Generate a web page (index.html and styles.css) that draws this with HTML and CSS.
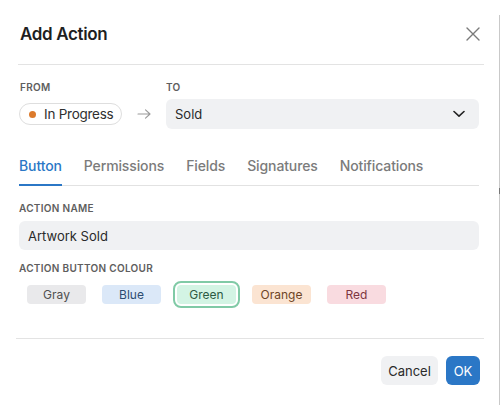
FILE: index.html
```html
<!DOCTYPE html>
<html>
<head>
<meta charset="utf-8">
<link rel="stylesheet" href="styles.css">
</head>
<body>
<div class="modal">
  <div class="header">
    <h1 class="title">Add Action</h1>
    <button class="close" aria-label="Close">
      <svg width="14" height="14" viewBox="0 0 14 14"><path d="M1 1L13 13M13 1L1 13" stroke="#7a7a7a" stroke-width="1.4" fill="none" stroke-linecap="round"/></svg>
    </button>
  </div>
  <div class="content">
    <div class="transition">
      <div class="from-col">
        <div class="label">FROM</div>
        <div class="pill-wrap">
          <span class="pill"><span class="dot"></span>In Progress</span>
        </div>
      </div>
      <div class="arrow-col">
        <svg width="14" height="10" viewBox="0 0 14 10"><path d="M1 5H13M8.5 0.8L13 5L8.5 9.2" stroke="#9a9a9a" stroke-width="1.1" fill="none" stroke-linecap="round" stroke-linejoin="round"/></svg>
      </div>
      <div class="to-col">
        <div class="label">TO</div>
        <div class="select">
          <span>Sold</span>
          <svg width="12" height="8" viewBox="0 0 12 8"><path d="M1 1.5L6 6.2L11 1.5" stroke="#222" stroke-width="1.6" fill="none" stroke-linecap="round" stroke-linejoin="round"/></svg>
        </div>
      </div>
    </div>
    <div class="tabs">
      <div class="tab active">Button</div>
      <div class="tab">Permissions</div>
      <div class="tab">Fields</div>
      <div class="tab">Signatures</div>
      <div class="tab">Notifications</div>
    </div>
    <div class="label label-name">ACTION NAME</div>
    <div class="input">Artwork Sold</div>
    <div class="label label-colour">ACTION BUTTON COLOUR</div>
    <div class="chips">
      <span class="chip gray">Gray</span>
      <span class="chip blue">Blue</span>
      <span class="chip green selected">Green</span>
      <span class="chip orange">Orange</span>
      <span class="chip red">Red</span>
    </div>
  </div>
  <div class="footer-divider"></div>
  <div class="footer">
    <button class="btn cancel">Cancel</button>
    <button class="btn ok">OK</button>
  </div>
</div>
<div class="edge"><span class="thumb"></span></div>
</body>
</html>
```
FILE: styles.css
```css
* { box-sizing: border-box; }
html, body { margin: 0; padding: 0; background: #fff; }
body {
  font-family: Inter, "Noto Sans", "Liberation Sans", sans-serif;
  color: #2a2a2a;
  width: 500px;
  height: 405px;
  overflow: hidden;
}
.modal { width: 499px; }
.header {
  height: 65px;
  margin: 0 15px 0 18px;
  padding: 3px 4px 0 2px;
  border-bottom: 1px solid #e3e3e3;
  display: flex;
  align-items: center;
  justify-content: space-between;
}
.title {
  margin: 0;
  font-size: 17px;
  font-weight: 600;
  color: #1f1f1f;
  letter-spacing: -0.35px;
}
.close {
  border: 0;
  background: none;
  padding: 0;
  width: 14px;
  height: 14px;
  display: flex;
  cursor: pointer;
}
.content { padding: 0 20px 0 19px; }
.label {
  font-size: 10px;
  font-weight: 600;
  color: #5e5e5e;
  letter-spacing: 0.3px;
  line-height: 14px;
}
.transition { display: flex; padding-top: 15px; }
.from-col { width: 104px; flex-shrink: 0; display: flex; flex-direction: column; }
.from-col .label { margin-left: 1px; }
.pill-wrap { height: 30px; margin-top: 5px; display: flex; align-items: center; }
.pill {
  display: inline-flex;
  align-items: center;
  white-space: nowrap;
  height: 22px;
  padding: 0 8px 0 9px;
  border: 1px solid #dedede;
  border-radius: 11px;
  font-size: 13.5px;
  letter-spacing: -0.25px;
  color: #2f2f2f;
}
.dot {
  width: 7px;
  height: 7px;
  border-radius: 50%;
  background: #dc7a2c;
  margin-right: 8px;
}
.arrow-col {
  width: 43px;
  flex-shrink: 0;
  height: 30px;
  margin-top: 19px;
  display: flex;
  align-items: center;
  padding-left: 14px;
}
.to-col { flex: 1; display: flex; flex-direction: column; }
.select {
  margin-top: 5px;
  height: 30px;
  background: #f0f1f3;
  border-radius: 6px;
  display: flex;
  align-items: center;
  justify-content: space-between;
  padding: 0 14px 0 9px;
  font-size: 13px;
  color: #2a2a2a;
}
.tabs {
  margin-top: 16px;
  display: flex;
  gap: 22px;
  border-bottom: 1px solid #e2e2e2;
}
.tab {
  padding: 11px 0 8px;
  line-height: 20px;
  font-size: 14px;
  font-weight: 500;
  letter-spacing: -0.12px;
  color: #7b7b7b;
  border-bottom: 2px solid transparent;
  margin-bottom: -1px;
}
.tab.active { color: #2b77c6; border-bottom-color: #2b77c6; }
.label-name { margin-top: 15px; }
.input {
  margin-top: 6px;
  height: 29px;
  background: #f0f1f3;
  border-radius: 6px;
  display: flex;
  align-items: center;
  padding-left: 9px;
  font-size: 13px;
  color: #2a2a2a;
}
.label-colour { margin-top: 11px; }
.chips {
  margin-top: 10px;
  padding-left: 8px;
  display: flex;
  gap: 16px;
}
.chip {
  width: 59px;
  height: 19px;
  border-radius: 4px;
  display: flex;
  align-items: center;
  justify-content: center;
  font-size: 12px;
}
.chip.gray { background: #e9e9eb; color: #505050; }
.chip.blue { background: #dbe8f8; color: #2d4b70; }
.chip.green { background: #d3f4e4; color: #2c5a43; }
.chip.orange { background: #fbe4d2; color: #6e4427; }
.chip.red { background: #f9dbe0; color: #7e3541; }
.chip.selected { outline: 2px solid #80caa6; outline-offset: 2px; border-radius: 4px; }
.footer-divider {
  margin: 34px 15px 0 16px;
  border-top: 1px solid #e3e3e3;
}
.footer {
  display: flex;
  justify-content: flex-end;
  gap: 8px;
  padding: 17px 19px 0 0;
}
.btn {
  height: 29px;
  border: 0;
  border-radius: 6px;
  font-family: inherit;
  font-size: 13px;
  padding: 0;
}
.btn.cancel { width: 57px; background: #f0f1f3; color: #2a2a2a; }
.btn.ok { width: 34px; background: #2b77c6; color: #fff; }
.edge {
  position: fixed;
  top: 15px;
  right: 0;
  bottom: 0;
  width: 1px;
  background: #c9c9c9;
}
.thumb {
  position: absolute;
  top: 173px;
  left: 0;
  width: 1px;
  height: 6px;
  background: #777;
}
```
